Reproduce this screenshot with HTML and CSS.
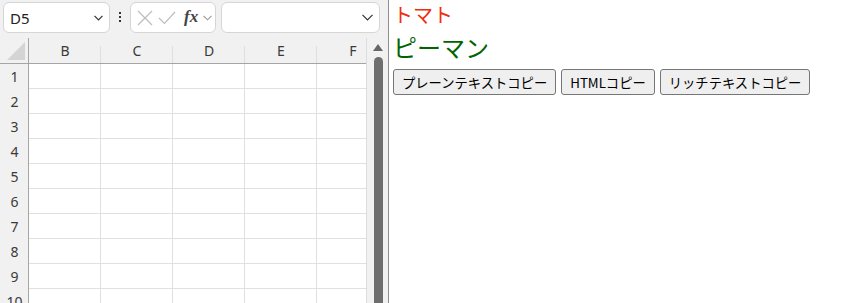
FILE: index.html
```html
<!DOCTYPE html>
<html lang="ja">
<head>
  <meta charset="UTF-8">
  <title>コピー</title>
  <link rel="stylesheet" href="styles.css">
</head>
<body>
  <div class="sheet">
    <div class="toolbar">
      <div class="namebox">
        <span>D5</span>
        <svg class="chev" width="9" height="6" viewBox="0 0 9 6"><path d="M0.5 0.8 L4.5 4.8 L8.5 0.8" fill="none" stroke="#333" stroke-width="1.2"/></svg>
      </div>
      <div class="dots"><i></i><i></i><i></i></div>
      <div class="fxbox">
        <svg width="16" height="16" viewBox="0 0 16 16"><path d="M1 1 L15 15 M15 1 L1 15" stroke="#bdbdbd" stroke-width="1.2" fill="none"/></svg>
        <svg width="18" height="14" viewBox="0 0 18 14"><path d="M1 7 L6.5 12.5 L17 1" stroke="#bdbdbd" stroke-width="1.2" fill="none"/></svg>
        <span class="fx">fx</span>
        <svg class="chev" width="9" height="6" viewBox="0 0 9 6"><path d="M0.5 0.8 L4.5 4.8 L8.5 0.8" fill="none" stroke="#9a9a9a" stroke-width="1.1"/></svg>
      </div>
      <div class="formula">
        <svg class="chev" width="11" height="7" viewBox="0 0 11 7"><path d="M0.5 0.8 L5.5 5.8 L10.5 0.8" fill="none" stroke="#333" stroke-width="1.2"/></svg>
      </div>
    </div>

    <div class="body">
      <div class="gridwrap">
        <div class="grid" id="grid">
          <div class="corner"><svg width="18" height="18" viewBox="0 0 18 18"><path d="M0 18 L18 18 L18 0 Z" fill="#d4d4d4"/></svg></div>
          <div class="colhead">B</div>
          <div class="colhead">C</div>
          <div class="colhead">D</div>
          <div class="colhead">E</div>
          <div class="colhead">F</div>
        </div>
      </div>
      <div class="vscroll">
        <svg class="up" width="10" height="7" viewBox="0 0 10 7"><path d="M5 0 L10 7 L0 7 Z" fill="#666"/></svg>
        <div class="thumb"></div>
      </div>
    </div>
  </div>

  <div class="panel">
    <div class="tomato">トマト</div>
    <div class="pepper">ピーマン</div>
    <div class="buttons">
      <button>プレーンテキストコピー</button>
      <button>HTMLコピー</button>
      <button>リッチテキストコピー</button>
    </div>
  </div>

  <script>
    // Build the row headers and empty cells
    const grid = document.getElementById('grid');
    for (let r = 1; r <= 10; r++) {
      const head = document.createElement('div');
      head.className = 'rowhead';
      head.textContent = r;
      grid.appendChild(head);
      for (let c = 0; c < 5; c++) {
        const cell = document.createElement('div');
        cell.className = 'cell';
        grid.appendChild(cell);
      }
    }
  </script>
</body>
</html>
```

FILE: styles.css
```css
/* Page split into the spreadsheet picture and the copy panel */
body {
  margin: 0;
  display: flex;
  height: 303px;
  overflow: hidden;
  font-family: "Noto Sans", "Noto Sans CJK JP", sans-serif;
}

.sheet {
  width: 388px;
  flex: none;
  background: #f1f1f1;
  border-right: 1px solid #8e8e8e;
  display: flex;
  flex-direction: column;
  overflow: hidden;
}

/* Name box and formula bar */
.toolbar {
  flex: none;
  height: 38px;
  box-sizing: border-box;
  padding: 2px 0 0 3px;
  display: flex;
  align-items: flex-start;
}
.namebox, .fxbox, .formula {
  height: 31px;
  box-sizing: border-box;
  background: #fff;
  border: 1px solid #d6d6d6;
  border-radius: 6px;
  display: flex;
  align-items: center;
}
.namebox {
  width: 107px;
  padding: 0 6px 0 6px;
  justify-content: space-between;
  font-size: 15px;
  color: #222;
}
.dots {
  width: 20px;
  display: flex;
  flex-direction: column;
  align-items: center;
  gap: 2px;
  padding-top: 10px;
}
.dots i {
  width: 2px;
  height: 2px;
  background: #333;
}
.fxbox {
  width: 86px;
  padding: 0 0 0 6px;
  gap: 5px;
}
.fx {
  font-family: "Liberation Serif", serif;
  font-style: italic;
  font-weight: bold;
  font-size: 17px;
  color: #444;
  margin-left: 3px;
  margin-top: -2px;
}
.formula {
  width: 159px;
  margin-left: 5px;
  justify-content: flex-end;
  padding-right: 6px;
}

/* Grid */
.body {
  flex: 1;
  min-height: 0;
  display: flex;
}
.gridwrap {
  width: 366px;
  flex: none;
  overflow: hidden;
}
.grid {
  display: grid;
  grid-template-columns: 29px repeat(5, 72px);
  grid-template-rows: 26px;
  grid-auto-rows: 25px;
  width: 389px;
}
.corner {
  border-bottom: 1px solid #a5a5a5;
  border-right: 1px solid #a5a5a5;
  box-sizing: border-box;
  display: flex;
  align-items: flex-end;
  justify-content: flex-end;
  padding: 0 3px 3px 0;
}
.colhead {
  border-bottom: 1px solid #a5a5a5;
  box-sizing: border-box;
  display: flex;
  align-items: center;
  justify-content: center;
  font-size: 14px;
  color: #3a3a3a;
  position: relative;
}
.colhead::after {
  content: "";
  position: absolute;
  right: 0;
  top: 8px;
  bottom: 0;
  width: 1px;
  background: #dedede;
}
.rowhead {
  border-right: 1px solid #a5a5a5;
  box-sizing: border-box;
  display: flex;
  align-items: center;
  justify-content: center;
  font-size: 14px;
  color: #3a3a3a;
  padding-left: 1px;
}
.cell {
  background: #fff;
  border-right: 1px solid #e0e0e0;
  border-bottom: 1px solid #e0e0e0;
  box-sizing: border-box;
}

/* Vertical scrollbar */
.vscroll {
  width: 22px;
  flex: none;
  border-left: 1px solid #dcdcdc;
  display: flex;
  flex-direction: column;
  align-items: center;
  padding-top: 6px;
  box-sizing: border-box;
}
.vscroll .up { margin-left: 1px; }
.thumb {
  width: 9px;
  flex: 1;
  margin-top: 6px;
  margin-left: 1px;
  background: #6e6e6e;
  border-radius: 5px 5px 0 0;
}

/* Copy panel */
.panel {
  flex: 1;
  background: #fff;
  padding: 2px 4px;
}
.tomato {
  color: #ef2e0c;
  font-size: 20px;
  line-height: 28px;
}
.pepper {
  color: #006400;
  font-size: 24px;
  line-height: 36px;
}
.buttons {
  display: flex;
  gap: 5px;
  margin-top: 3px;
}
.buttons button {
  font-family: "Noto Sans CJK JP", sans-serif;
  font-size: 13.3px;
  height: 26px;
  padding: 0 8px;
  background: #efefef;
  border: 1px solid #767676;
  border-radius: 3px;
  color: #000;
}
```
